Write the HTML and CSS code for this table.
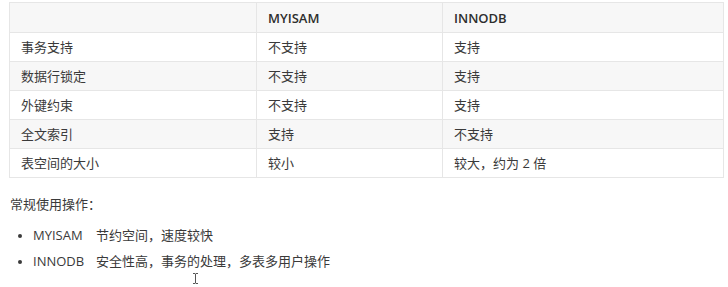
FILE: index.html
```html
<!DOCTYPE html>
<html lang="zh-CN">
<head>
<meta charset="utf-8">
<link rel="stylesheet" href="styles.css">
</head>
<body>
<div class="page">
  <table class="cmp">
    <thead>
      <tr><th class="c1"></th><th class="c2">MYISAM</th><th class="c3">INNODB</th></tr>
    </thead>
    <tbody>
      <tr><td>事务支持</td><td>不支持</td><td>支持</td></tr>
      <tr><td>数据行锁定</td><td>不支持</td><td>支持</td></tr>
      <tr><td>外键约束</td><td>不支持</td><td>支持</td></tr>
      <tr><td>全文索引</td><td>支持</td><td>不支持</td></tr>
      <tr><td>表空间的大小</td><td>较小</td><td>较大，约为 2 倍</td></tr>
    </tbody>
  </table>
  <p class="lead">常规使用操作：</p>
  <ul class="uses">
    <li><span class="k">MYISAM</span>节约空间，速度较快</li>
    <li><span class="k">INNODB</span>安全性高，事务的处理，多表多用户操作</li>
  </ul>
  <svg class="cursor" width="7" height="11" viewBox="0 0 7 11"><path d="M1 0.5h2l0.5 0.5 0.5-0.5h2M3.5 1v9M1 10.5h2l0.5-0.5 0.5 0.5h2" fill="none" stroke="#555" stroke-width="1"/></svg>
</div>
</body>
</html>
```
FILE: styles.css
```css
html, body { margin: 0; padding: 0; background: #fff; }
body {
  font-family: "Open Sans", "Noto Sans CJK SC", sans-serif;
  font-size: 13px;
  color: #3a3a3a;
}
.page { position: relative; padding: 2px 5px 0 9px; height: 285px; }
.cmp {
  border-collapse: collapse;
  width: 715px;
}
.cmp th, .cmp td {
  border: 1px solid #e6e6e6;
  padding: 4px 12px 4px 11px;
  line-height: 20px;
  height: 20px;
  text-align: left;
  vertical-align: middle;
}
.cmp th { font-weight: 600; color: #2e2e2e; height: 21px; }
.cmp thead tr { background: #f7f7f7; }
.cmp tbody tr:nth-child(even) { background: #f7f7f7; }
.cmp tbody tr:nth-child(odd) { background: #fff; }
.c1 { width: 223px; }
.c2 { width: 162px; }
.lead { margin: 16px 0 0 1px; line-height: 20px; }
.uses { margin: 8px 0 0 0; padding: 0 0 0 24px; }
.uses li { line-height: 26px; }
.uses li::marker { font-size: 11px; }
.k { display: inline-block; width: 63px; }
.cursor { position: absolute; left: 192px; top: 273px; }
```
